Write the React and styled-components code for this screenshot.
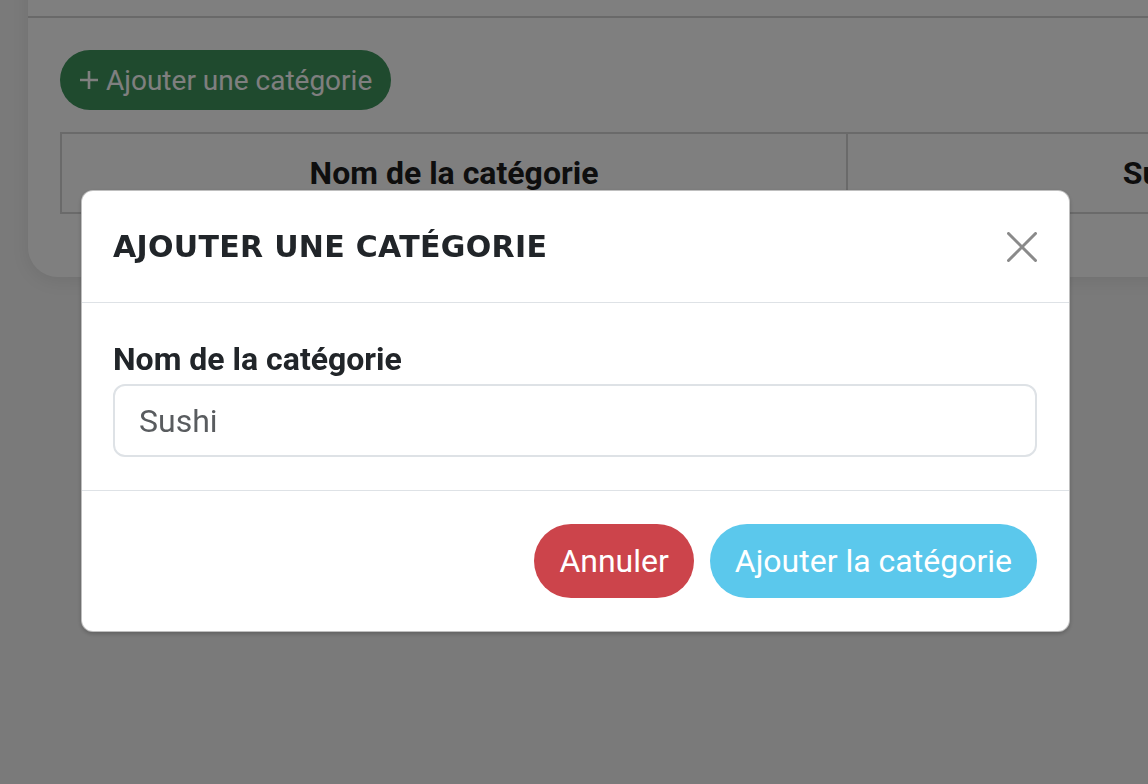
import React from "react";
import styled, { createGlobalStyle } from "styled-components";

const GlobalStyle = createGlobalStyle`
  html, body {
    margin: 0;
    padding: 0;
    background: #f4f4f4;
    overflow: hidden;
  }
  body {
    font-family: Roboto, "Liberation Sans", Arial, sans-serif;
    width: 1148px;
    height: 784px;
  }
  * { box-sizing: border-box; }
`;

const Page = styled.div`
  height: 784px;
  padding-left: 28px;
  overflow: hidden;
`;

const Card = styled.section`
  width: 1560px;
  margin-top: -38px;
  background: #fff;
  border-radius: 0 0 30px 30px;
  box-shadow: 0 4px 18px rgba(0, 0, 0, 0.08);
`;

const CardHeader = styled.div`
  height: 56px;
  border-bottom: 2px solid #d2d2d2;
`;

const CardBody = styled.div`
  padding: 32px 32px 63px;
  display: flex;
  flex-direction: column;
  align-items: flex-start;
  gap: 22px;
`;

const AddButton = styled.button`
  height: 60px;
  padding: 0 19px;
  border: none;
  border-radius: 30px;
  background: #3e945d;
  color: #fff;
  font-family: Roboto, sans-serif;
  font-size: 28px;
  display: flex;
  align-items: center;
  gap: 7px;
`;

const Table = styled.table`
  border-collapse: collapse;
  table-layout: fixed;
`;

const Th = styled.th`
  width: ${(p) => p.$w}px;
  height: 80px;
  border: 2px solid #d4d4d4;
  font-family: Roboto, sans-serif;
  font-weight: 700;
  font-size: 32px;
  color: #1c1c1c;
  text-align: center;
  white-space: nowrap;
`;

const Overlay = styled.div`
  position: fixed;
  inset: 0;
  background: rgba(0, 0, 0, 0.5);
  padding: 190px 0 0 81px;
`;

const Modal = styled.div`
  width: 989px;
  background: #fff;
  border: 1px solid rgba(0, 0, 0, 0.25);
  border-radius: 12px;
  box-shadow: 0 2px 4px rgba(0, 0, 0, 0.2);
  overflow: hidden;
`;

const ModalHeader = styled.header`
  height: 112px;
  padding: 0 32px 0 31px;
  display: flex;
  align-items: center;
  justify-content: space-between;
  border-bottom: 1px solid #dee2e6;
`;

const Title = styled.h5`
  margin: 0;
  font-family: "DejaVu Sans", sans-serif;
  font-weight: 700;
  font-size: 30px;
  letter-spacing: 0.3px;
  color: #212529;
`;

const CloseButton = styled.button`
  width: 30px;
  height: 30px;
  padding: 0;
  border: none;
  background: transparent;
  display: flex;
  cursor: pointer;
`;

const ModalBody = styled.div`
  padding: 34px 32px 33px 31px;
  border-bottom: 1px solid #dee2e6;
`;

const Label = styled.label`
  display: block;
  font-family: Roboto, sans-serif;
  font-weight: 700;
  font-size: 32px;
  line-height: 44px;
  color: #212529;
  margin-bottom: 3px;
`;

const Input = styled.input`
  display: block;
  width: 100%;
  height: 73px;
  padding: 0 24px;
  border: 2px solid #dee2e6;
  border-radius: 12px;
  font-family: Roboto, sans-serif;
  font-size: 32px;
  color: #595c5f;
  outline: none;
`;

const ModalFooter = styled.footer`
  padding: 33px 32px;
  display: flex;
  justify-content: flex-end;
  gap: 16px;
`;

const PillButton = styled.button`
  height: 74px;
  padding: 0 25px;
  border: none;
  border-radius: 37px;
  background: ${(p) => p.$bg};
  color: #fff;
  font-family: Roboto, sans-serif;
  font-size: 32px;
  cursor: pointer;
`;

export default function App() {
  return (
    <>
      <GlobalStyle />
      <Page>
        <Card>
          <CardHeader />
          <CardBody>
            <AddButton>
              <svg width="20" height="20" viewBox="0 0 20 20">
                <path d="M10 1v18M1 10h18" stroke="#fff" strokeWidth="2.6" />
              </svg>
              Ajouter une catégorie
            </AddButton>
            <Table>
              <thead>
                <tr>
                  <Th $w={786}>Nom de la catégorie</Th>
                  <Th $w={702}>Supprimer</Th>
                </tr>
              </thead>
            </Table>
          </CardBody>
        </Card>
      </Page>
      <Overlay>
        <Modal>
          <ModalHeader>
            <Title>AJOUTER UNE CATÉGORIE</Title>
            <CloseButton aria-label="Fermer">
              <svg width="30" height="30" viewBox="0 0 30 30">
                <path
                  d="M1.5 1.5L28.5 28.5M28.5 1.5L1.5 28.5"
                  stroke="#8a8a8a"
                  strokeWidth="3"
                  strokeLinecap="round"
                />
              </svg>
            </CloseButton>
          </ModalHeader>
          <ModalBody>
            <Label htmlFor="cat">Nom de la catégorie</Label>
            <Input id="cat" defaultValue="Sushi" />
          </ModalBody>
          <ModalFooter>
            <PillButton $bg="#cc444b">Annuler</PillButton>
            <PillButton $bg="#5bc8ec">Ajouter la catégorie</PillButton>
          </ModalFooter>
        </Modal>
      </Overlay>
    </>
  );
}
